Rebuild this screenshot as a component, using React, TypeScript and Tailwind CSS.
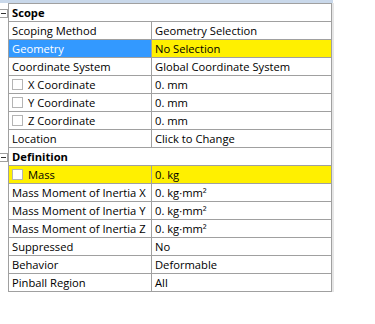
type Row = {
  label: string;
  value?: string;
  header?: boolean;
  check?: boolean;
  tone?: 'select' | 'yellow';
};

const rows: Row[] = [
  { label: 'Scope', header: true },
  { label: 'Scoping Method', value: 'Geometry Selection' },
  { label: 'Geometry', value: 'No Selection', tone: 'select' },
  { label: 'Coordinate System', value: 'Global Coordinate System' },
  { label: 'X Coordinate', value: '0. mm', check: true },
  { label: 'Y Coordinate', value: '0. mm', check: true },
  { label: 'Z Coordinate', value: '0. mm', check: true },
  { label: 'Location', value: 'Click to Change' },
  { label: 'Definition', header: true },
  { label: 'Mass', value: '0. kg', check: true, tone: 'yellow' },
  { label: 'Mass Moment of Inertia X', value: '0. kg·mm²' },
  { label: 'Mass Moment of Inertia Y', value: '0. kg·mm²' },
  { label: 'Mass Moment of Inertia Z', value: '0. kg·mm²' },
  { label: 'Suppressed', value: 'No' },
  { label: 'Behavior', value: 'Deformable' },
  { label: 'Pinball Region', value: 'All' },
];

function Collapse() {
  return (
    <div className="w-[9px] h-[9px] border border-[#a0a0a0] bg-white flex items-center justify-center -ml-px">
      <div className="w-[5px] h-px bg-[#333]" />
    </div>
  );
}

function Check() {
  return <div className="w-[11px] h-[11px] border border-[#b4b4b4] bg-white shrink-0" />;
}

function DetailRow({ row }: { row: Row }) {
  if (row.header) {
    return (
      <div className="flex h-[18px]">
        <div className="w-[8px] flex items-center">
          <Collapse />
        </div>
        <div className="w-[324px] border-l border-r border-b border-[#a0a0a0] bg-white pl-[3px] flex items-center font-bold">
          {row.label}
        </div>
      </div>
    );
  }
  const labelBg =
    row.tone === 'select' ? 'bg-[#3399ff] text-white' : row.tone === 'yellow' ? 'bg-[#fff000]' : 'bg-white';
  const valueBg = row.tone ? 'bg-[#fff000]' : 'bg-white';
  return (
    <div className="flex h-[18px]">
      <div className="w-[8px]" />
      <div className="w-[324px] flex border-l border-r border-b border-[#a0a0a0]">
        <div className={`w-[143px] border-r border-[#a0a0a0] pl-[3px] flex items-center gap-[5px] whitespace-nowrap ${labelBg}`}>
          {row.check && <Check />}
          <span>{row.label}</span>
        </div>
        <div className={`flex-1 pl-[3px] flex items-center whitespace-nowrap ${valueBg}`}>{row.value}</div>
      </div>
    </div>
  );
}

export default function App() {
  return (
    <div
      className="w-[375px] h-[324px] bg-white text-black text-[11.2px] leading-none overflow-hidden"
      style={{ fontFamily: '"Open Sans", "Noto Sans", sans-serif' }}
    >
      <div className="flex">
        <div className="w-[333px]">
          <div className="h-[3px] bg-[#c9d8ea]" />
          <div className="ml-[8px] h-px w-[324px] bg-[#a0a0a0]" />
          {rows.map((r) => (
            <DetailRow key={r.label} row={r} />
          ))}
        </div>
        <div className="w-[2px] mt-[3px] h-[289px] bg-[#e6e6e6] -ml-px" />
      </div>
    </div>
  );
}
